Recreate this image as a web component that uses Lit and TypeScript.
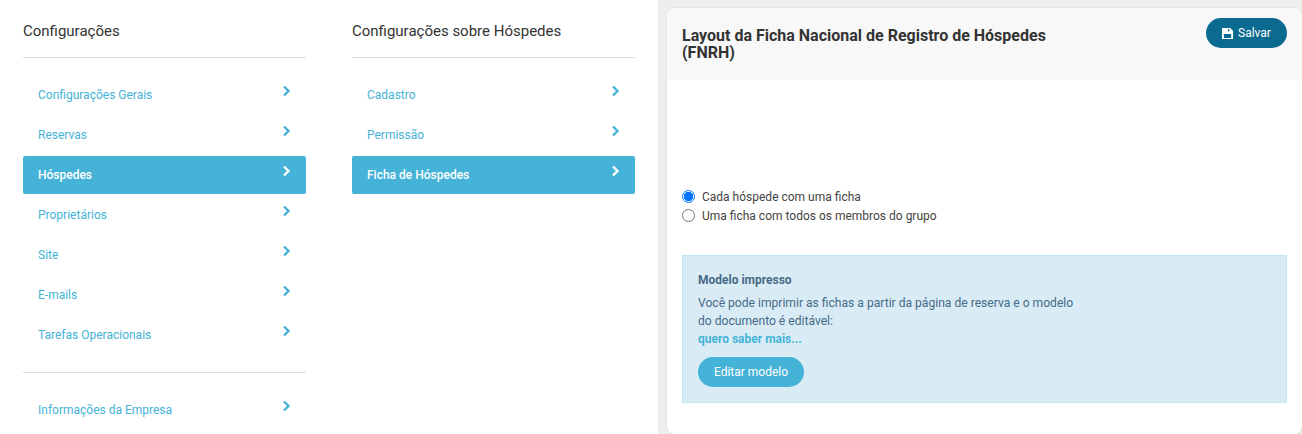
import { LitElement, html, css } from "lit";
import { customElement } from "lit/decorators.js";

const mainMenu = ["Configurações Gerais", "Reservas", "Hóspedes", "Proprietários", "Site", "E-mails", "Tarefas Operacionais"];
const guestMenu = ["Cadastro", "Permissão", "Ficha de Hóspedes"];

@customElement("app-root")
export class AppRoot extends LitElement {
  static styles = css`
    :host {
      display: block;
      font-family: Roboto, "Liberation Sans", sans-serif;
      color: #333;
    }
    .page {
      display: flex;
      height: 434px;
      overflow: hidden;
      background: #fff;
    }
    .menus {
      display: flex;
      gap: 46px;
      padding: 0 23px;
      flex: none;
    }
    .col {
      width: 283px;
      flex: none;
    }
    .col-title {
      height: 58px;
      box-sizing: border-box;
      padding-top: 22px;
      font-size: 15px;
      line-height: 18px;
      color: #333;
      border-bottom: 1px solid #ddd;
      margin-bottom: 18px;
    }
    .item {
      display: flex;
      justify-content: space-between;
      height: 38px;
      margin-bottom: 2px;
      padding: 0 15px;
      border-radius: 2px;
      color: #45b3d7;
      font-size: 12px;
      line-height: 38px;
    }
    .item.on {
      background: #45b3d7;
      color: #fff;
      font-weight: 500;
    }
    .item svg {
      width: 9px;
      height: 12px;
      margin-top: 9px;
    }
    .sep {
      border-top: 1px solid #ddd;
      margin: 18px 0 18px;
    }
    .side {
      flex: 1;
      background: #eee;
      padding: 8px 0 0 9px;
      min-width: 0;
    }
    .card {
      height: 426px;
      background: #fff;
      border-radius: 8px;
      box-shadow: 0 0 2px rgba(0, 0, 0, 0.12);
      overflow: hidden;
    }
    .card-head {
      display: flex;
      justify-content: space-between;
      height: 72px;
      box-sizing: border-box;
      padding: 10px 15px 0;
      background: #f8f8f8;
    }
    h2 {
      margin: 0;
      padding-top: 9px;
      width: 400px;
      font-size: 16px;
      line-height: 17px;
      font-weight: 700;
      color: #333;
    }
    .save {
      display: flex;
      align-items: center;
      justify-content: center;
      gap: 5px;
      width: 81px;
      height: 30px;
      border-radius: 15px;
      background: #0a6a90;
      color: #fff;
      font-size: 12px;
    }
    .save svg {
      width: 11px;
      height: 11px;
    }
    .card-body {
      padding: 107px 15px 0;
    }
    .radio {
      display: flex;
      align-items: center;
      gap: 7px;
      height: 19px;
      font-size: 12px;
      color: #444;
    }
    .dot {
      width: 13px;
      height: 13px;
      box-sizing: border-box;
      border-radius: 50%;
      border: 1px solid #767676;
      background: #fff;
    }
    .dot.on {
      border: 1px solid #0075ff;
      background: radial-gradient(circle, #0075ff 0 4.5px, #fff 5px);
    }
    .note {
      margin-top: 30px;
      height: 148px;
      box-sizing: border-box;
      padding: 15px;
      background: #d9ecf6;
      border: 1px solid #bce8f1;
      color: #466a87;
      font-size: 12.1px;
      line-height: 18px;
    }
    .note b {
      display: block;
      font-size: 12px;
      font-weight: 700;
      margin-bottom: 5px;
    }
    .note a {
      display: block;
      color: #45b3d7;
      font-size: 12px;
      font-weight: 700;
    }
    .edit {
      margin-top: 9px;
      display: flex;
      align-items: center;
      justify-content: center;
      width: 106px;
      height: 30px;
      border-radius: 15px;
      background: #45b3d7;
      color: #fff;
      font-size: 12px;
    }
  `;

  private chevron() {
    return html`<svg viewBox="0 0 9 12"><path d="M2 1.500 6.500 6 2 10.500" fill="none" stroke="currentColor" stroke-width="2.4"/></svg>`;
  }

  private row(label: string, on = false) {
    return html`<div class="item ${on ? "on" : ""}"><span>${label}</span>${this.chevron()}</div>`;
  }

  render() {
    return html`
      <div class="page">
        <div class="menus">
          <div class="col">
            <div class="col-title">Configurações</div>
            ${mainMenu.map((m) => this.row(m, m === "Hóspedes"))}
            <div class="sep"></div>
            ${this.row("Informações da Empresa")}
          </div>
          <div class="col">
            <div class="col-title">Configurações sobre Hóspedes</div>
            ${guestMenu.map((m) => this.row(m, m === "Ficha de Hóspedes"))}
          </div>
        </div>
        <div class="side">
          <div class="card">
            <div class="card-head">
              <h2>Layout da Ficha Nacional de Registro de Hóspedes (FNRH)</h2>
              <div class="save">
                <svg viewBox="0 0 12 12"><path fill="currentColor" fill-rule="evenodd" d="M0 0h9l3 3v9H0ZM6.500 1.200v2.300h1.500V1.200ZM2 6.500V10.800h8V6.500Z"/></svg>
                Salvar
              </div>
            </div>
            <div class="card-body">
              <div class="radio"><span class="dot on"></span>Cada hóspede com uma ficha</div>
              <div class="radio"><span class="dot"></span>Uma ficha com todos os membros do grupo</div>
              <div class="note">
                <b>Modelo impresso</b>
                Você pode imprimir as fichas a partir da página de reserva e o modelo<br />do documento é editável:
                <a>quero saber mais...</a>
                <div class="edit">Editar modelo</div>
              </div>
            </div>
          </div>
        </div>
      </div>
    `;
  }
}
